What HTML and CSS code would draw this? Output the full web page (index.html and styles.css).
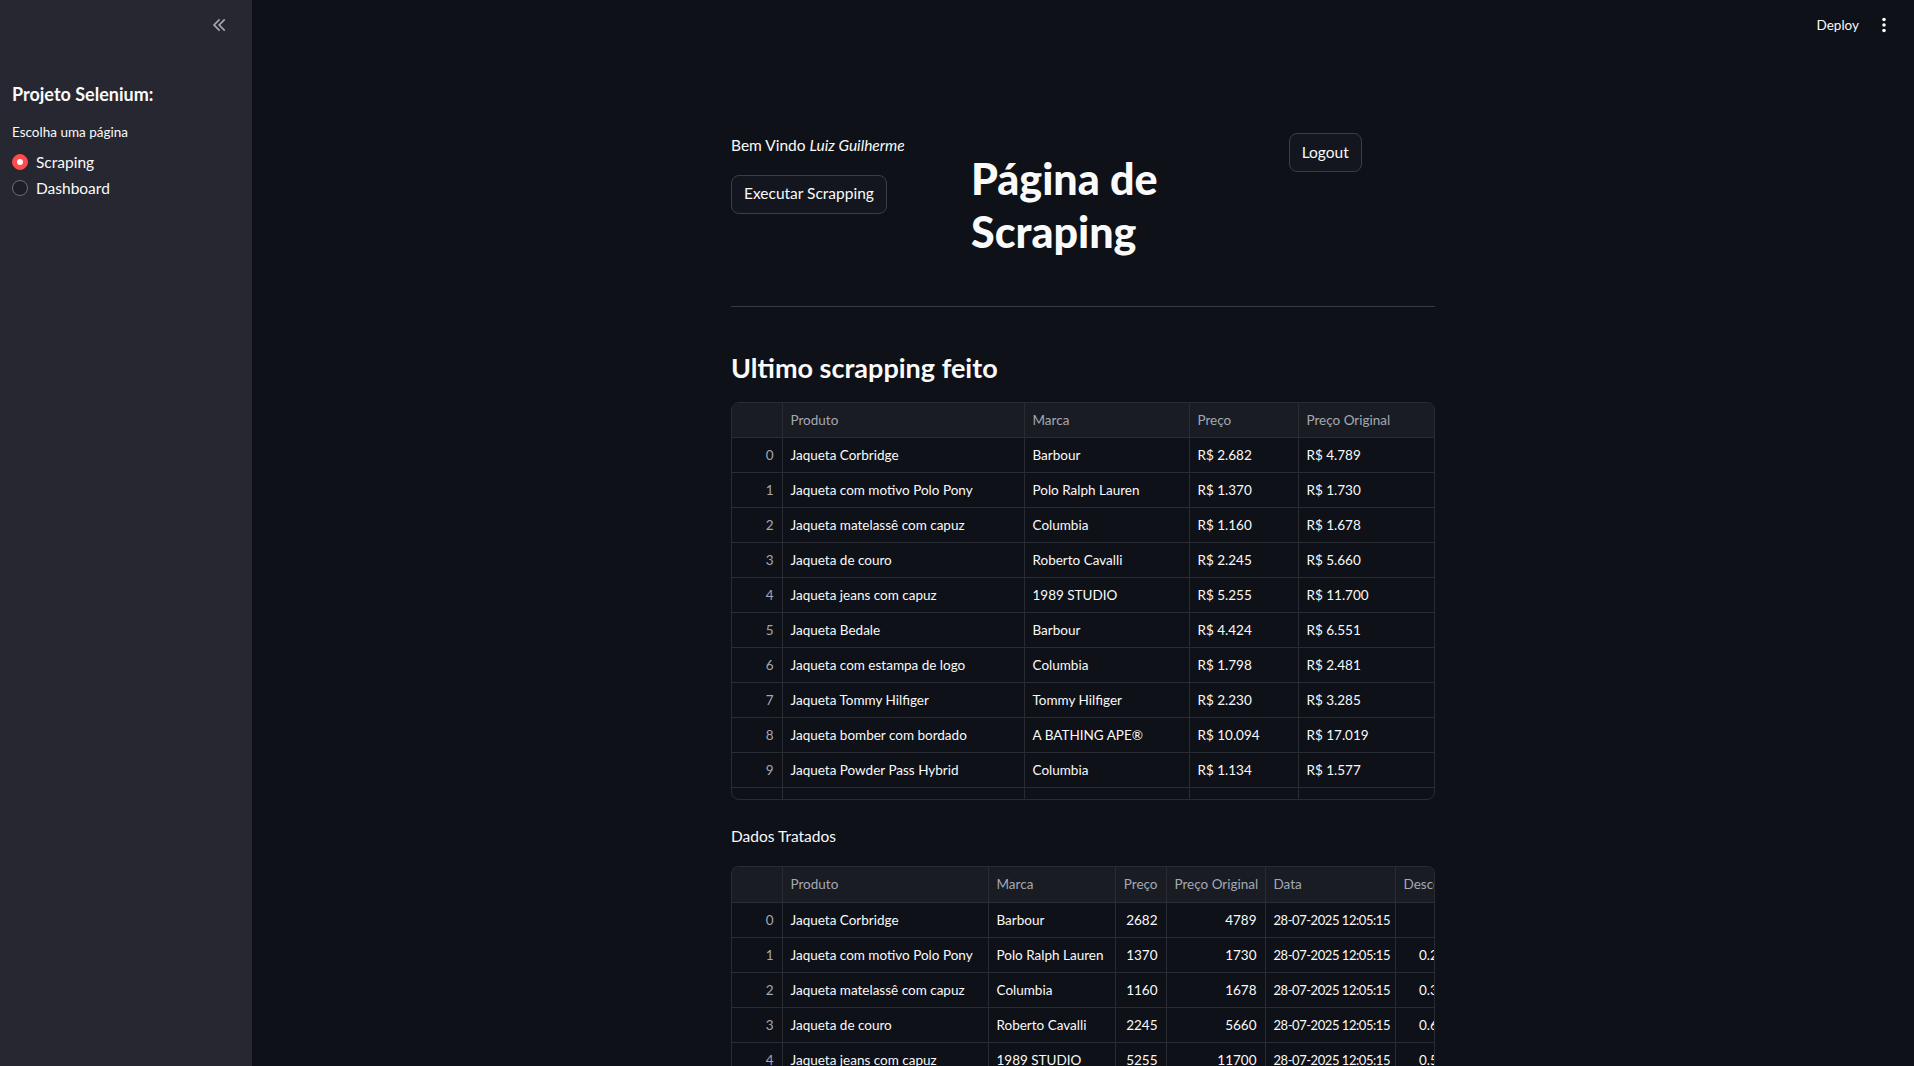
FILE: index.html
```html
<!DOCTYPE html>
<html lang="pt-BR">
<head>
<meta charset="utf-8">
<title>Projeto Selenium</title>
<link rel="stylesheet" href="styles.css">
</head>
<body>
<div class="app">
  <aside class="sidebar">
    <div class="sidebar-head">
      <svg class="collapse" width="20" height="20" viewBox="0 0 24 24"><path d="M18.4 18L12.4 12L18.4 6L17 4.6L9.6 12L17 19.4ZM12.2 18L6.2 12L12.2 6L10.8 4.6L3.4 12L10.8 19.4Z" fill="#a3a6ad"/></svg>
    </div>
    <div class="sidebar-body">
      <h3 class="side-title">Projeto Selenium:</h3>
      <div class="radio-label">Escolha uma página</div>
      <div class="radio-group">
        <div class="radio-item"><span class="radio-dot on"></span><span>Scraping</span></div>
        <div class="radio-item"><span class="radio-dot"></span><span>Dashboard</span></div>
      </div>
    </div>
  </aside>
  <main class="main">
    <header class="topbar">
      <span class="deploy">Deploy</span>
      <svg class="kebab" width="6" height="16" viewBox="0 0 6 16"><circle cx="3" cy="2.5" r="1.8" fill="#fafafa"/><circle cx="3" cy="8" r="1.8" fill="#fafafa"/><circle cx="3" cy="13.5" r="1.8" fill="#fafafa"/></svg>
    </header>
    <div class="block">
      <div class="cols">
        <div class="col col1">
          <p class="welcome">Bem Vindo <em>Luiz Guilherme</em></p>
          <button class="btn">Executar Scrapping</button>
        </div>
        <div class="col">
          <h1 class="title">Página de Scraping</h1>
        </div>
        <div class="col col3">
          <button class="btn logout">Logout</button>
        </div>
      </div>
      <hr class="divider">
      <h3 class="sub">Ultimo scrapping feito</h3>
      <div class="grid-wrap t1">
        <table class="grid">
          <colgroup><col style="width:50px"><col style="width:242px"><col style="width:165px"><col style="width:109px"><col></colgroup>
          <thead><tr><th></th><th>Produto</th><th>Marca</th><th>Preço</th><th>Preço Original</th></tr></thead>
          <tbody>
            <tr><td class="idx">0</td><td>Jaqueta Corbridge</td><td>Barbour</td><td>R$ 2.682</td><td>R$ 4.789</td></tr>
            <tr><td class="idx">1</td><td>Jaqueta com motivo Polo Pony</td><td>Polo Ralph Lauren</td><td>R$ 1.370</td><td>R$ 1.730</td></tr>
            <tr><td class="idx">2</td><td>Jaqueta matelassê com capuz</td><td>Columbia</td><td>R$ 1.160</td><td>R$ 1.678</td></tr>
            <tr><td class="idx">3</td><td>Jaqueta de couro</td><td>Roberto Cavalli</td><td>R$ 2.245</td><td>R$ 5.660</td></tr>
            <tr><td class="idx">4</td><td>Jaqueta jeans com capuz</td><td>1989 STUDIO</td><td>R$ 5.255</td><td>R$ 11.700</td></tr>
            <tr><td class="idx">5</td><td>Jaqueta Bedale</td><td>Barbour</td><td>R$ 4.424</td><td>R$ 6.551</td></tr>
            <tr><td class="idx">6</td><td>Jaqueta com estampa de logo</td><td>Columbia</td><td>R$ 1.798</td><td>R$ 2.481</td></tr>
            <tr><td class="idx">7</td><td>Jaqueta Tommy Hilfiger</td><td>Tommy Hilfiger</td><td>R$ 2.230</td><td>R$ 3.285</td></tr>
            <tr><td class="idx">8</td><td>Jaqueta bomber com bordado</td><td>A BATHING APE®</td><td>R$ 10.094</td><td>R$ 17.019</td></tr>
            <tr><td class="idx">9</td><td>Jaqueta Powder Pass Hybrid</td><td>Columbia</td><td>R$ 1.134</td><td>R$ 1.577</td></tr>
            <tr><td class="idx">10</td><td>Jaqueta de nylon</td><td>GANNI</td><td>R$ 1.990</td><td>R$ 2.490</td></tr>
          </tbody>
        </table>
      </div>
      <p class="caption">Dados Tratados</p>
      <div class="grid-wrap t2">
        <table class="grid wide">
          <colgroup><col style="width:50px"><col style="width:206px"><col style="width:127px"><col style="width:51px"><col style="width:99px"><col style="width:130px"><col style="width:90px"></colgroup>
          <thead><tr><th></th><th>Produto</th><th>Marca</th><th class="r">Preço</th><th>Preço Original</th><th>Data</th><th>Desconto</th></tr></thead>
          <tbody>
            <tr><td class="idx">0</td><td>Jaqueta Corbridge</td><td>Barbour</td><td class="r">2682</td><td class="r">4789</td><td class="dt">28-07-2025 12:05:15</td><td class="r"></td></tr>
            <tr><td class="idx">1</td><td>Jaqueta com motivo Polo Pony</td><td>Polo Ralph Lauren</td><td class="r">1370</td><td class="r">1730</td><td class="dt">28-07-2025 12:05:15</td><td class="r">0.208092</td></tr>
            <tr><td class="idx">2</td><td>Jaqueta matelassê com capuz</td><td>Columbia</td><td class="r">1160</td><td class="r">1678</td><td class="dt">28-07-2025 12:05:15</td><td class="r">0.308701</td></tr>
            <tr><td class="idx">3</td><td>Jaqueta de couro</td><td>Roberto Cavalli</td><td class="r">2245</td><td class="r">5660</td><td class="dt">28-07-2025 12:05:15</td><td class="r">0.603357</td></tr>
            <tr><td class="idx">4</td><td>Jaqueta jeans com capuz</td><td>1989 STUDIO</td><td class="r">5255</td><td class="r">11700</td><td class="dt">28-07-2025 12:05:15</td><td class="r">0.550855</td></tr>
            <tr><td class="idx">5</td><td>Jaqueta Bedale</td><td>Barbour</td><td class="r">4424</td><td class="r">6551</td><td class="dt">28-07-2025 12:05:15</td><td class="r">0.324683</td></tr>
          </tbody>
        </table>
      </div>
    </div>
  </main>
</div>
</body>
</html>
```

FILE: styles.css
```css
* { box-sizing: border-box; }
html, body { margin: 0; padding: 0; height: 100%; }
body {
  background: #0e1117;
  color: #fafafa;
  font-family: Lato, "Noto Sans", "Liberation Sans", sans-serif;
  overflow: hidden;
}
.app { display: flex; height: 100vh; }

.sidebar {
  width: 252px;
  flex-shrink: 0;
  background: #262730;
  height: 100%;
}
.sidebar-head {
  height: 50px;
  display: flex;
  align-items: center;
  justify-content: flex-end;
  padding-right: 22px;
}
.collapse { display: block; }
.sidebar-body { padding: 32px 12px 0; }
.side-title {
  margin: 0;
  font-size: 18px;
  font-weight: 700;
  line-height: 24px;
}
.radio-label {
  margin-top: 16px;
  font-size: 13.5px;
  line-height: 20px;
}
.radio-group { margin-top: 8px; display: flex; flex-direction: column; gap: 2px; }
.radio-item {
  display: flex;
  align-items: center;
  gap: 8px;
  font-size: 15.5px;
  line-height: 24px;
}
.radio-dot {
  width: 16px; height: 16px;
  border-radius: 50%;
  border: 1px solid #6b6d75;
  background: #1e1f26;
  position: relative;
  flex-shrink: 0;
}
.radio-dot.on { background: #ff4b4b; border-color: #ff4b4b; }
.radio-dot.on::after {
  content: "";
  position: absolute;
  left: 4px; top: 4px;
  width: 6px; height: 6px;
  border-radius: 50%;
  background: #fafafa;
}

.main { flex: 1; min-width: 0; height: 100%; overflow: hidden; }
.topbar {
  height: 50px;
  display: flex;
  align-items: center;
  justify-content: flex-end;
  gap: 22px;
  padding-right: 27px;
}
.deploy { font-size: 13.5px; color: #fafafa; }
.kebab { display: block; }

.block {
  width: 704px;
  margin: 0 auto;
  padding-top: 83px;
}
.cols {
  display: grid;
  grid-template-columns: 1.5fr 2fr 1fr;
  gap: 16px;
  align-items: start;
}
.col { display: flex; flex-direction: column; align-items: flex-start; gap: 16px; }
.col3 { padding-left: 3px; }
.welcome { margin: 0; font-size: 15.5px; line-height: 25.6px; }
.btn {
  font-family: inherit;
  font-size: 15.5px;
  color: #fafafa;
  background: #13161e;
  border: 1px solid #3b3e46;
  border-radius: 8px;
  height: 39px;
  padding: 0 12px;
  line-height: 1;
}
.logout { padding: 0 12px; }
.title {
  margin: 0;
  padding: 20px 0 16px;
  font-size: 43px;
  font-weight: 900;
  line-height: 52.8px;
}
.divider {
  margin: 31px 0 0;
  border: 0;
  border-top: 1px solid #393b42;
}
.sub {
  margin: 44px 0 0;
  font-size: 27px;
  font-weight: 700;
  line-height: 34px;
}
.grid-wrap {
  border: 1px solid #2a2c33;
  border-radius: 8px;
  overflow: hidden;
}
.t1 { margin-top: 17px; height: 398px; }
.t2 { margin-top: 17px; height: 240px; border-bottom: 0; border-radius: 8px 8px 0 0; }
.grid {
  border-collapse: collapse;
  table-layout: fixed;
  width: 100%;
  font-size: 13.5px;
}
.grid.wide { width: 753px; }
.grid th, .grid td {
  height: 35px;
  padding: 0 8px;
  border-right: 1px solid #2a2c33;
  border-bottom: 1px solid #2a2c33;
  white-space: nowrap;
  overflow: hidden;
  text-align: left;
  font-weight: 400;
}
.grid th:last-child, .grid td:last-child { border-right: 0; }
.grid th {
  background: #1a1c24;
  color: #a3a8b4;
}
.grid td { color: #fafafa; }
.grid .idx { text-align: right; color: #a3a8b4; }
.grid .r { text-align: right; }
.grid .dt { font-size: 13px; letter-spacing: -0.45px; }
.caption { margin: 24px 0 0; font-size: 15.5px; line-height: 25.6px; }
```
